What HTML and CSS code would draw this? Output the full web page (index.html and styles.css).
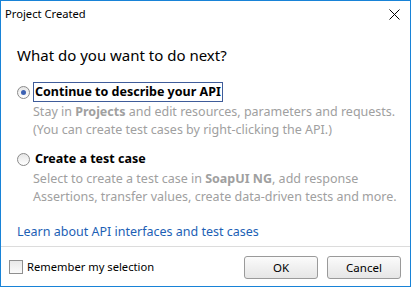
FILE: index.html
```html
<!DOCTYPE html>
<html lang="en">
<head>
  <meta charset="UTF-8" />
  <title>Project Created</title>
  <link rel="stylesheet" href="styles.css">
</head>
<body>
  <div class="window">
    <div class="titlebar">
      <span class="title">Project Created</span>
      <svg class="close" width="11" height="11" viewBox="0 0 11 11">
        <path d="M0.5 0.5 L10.5 10.5 M10.5 0.5 L0.5 10.5" stroke="#000" stroke-width="1" fill="none"/>
      </svg>
    </div>

    <div class="content">
      <h1>What do you want to do next?</h1>

      <div class="option">
        <div class="option-head">
          <span class="radio checked"></span>
          <span class="label focused">Continue to describe your API</span>
        </div>
        <div class="desc">
          Stay in <b>Projects</b> and edit resources, parameters and requests.<br>
          (You can create test cases by right-clicking the API.)
        </div>
      </div>

      <div class="option">
        <div class="option-head">
          <span class="radio"></span>
          <span class="label">Create a test case</span>
        </div>
        <div class="desc">
          Select to create a test case in <b>SoapUI NG</b>, add response<br>
          Assertions, transfer values, create data-driven tests and more.
        </div>
      </div>

      <a class="learn" href="#">Learn about API interfaces and test cases</a>
    </div>

    <div class="footer">
      <label class="remember"><span class="checkbox"></span>Remember my selection</label>
      <div class="buttons">
        <button class="btn">OK</button>
        <button class="btn">Cancel</button>
      </div>
    </div>
  </div>
</body>
</html>
```

FILE: styles.css
```css
html, body {
  margin: 0;
  padding: 0;
  background: #fff;
}

body {
  font-family: "Noto Sans", "Open Sans", sans-serif;
  font-size: 12px;
  color: #000;
}

.window {
  width: 411px;
  height: 287px;
  box-sizing: border-box;
  border: 1px solid #1883d7;
  display: flex;
  flex-direction: column;
  background: #fff;
  overflow: hidden;
}

.titlebar {
  height: 29px;
  flex: none;
  display: flex;
  align-items: center;
  justify-content: space-between;
  padding: 0 10px 0 4px;
}

.title {
  font-size: 11.2px;
  margin-top: -4px;
}

.close {
  display: block;
  margin-top: -2px;
}

.content {
  flex: 1;
  min-height: 0;
  padding: 14px 16px 0 16px;
  white-space: nowrap;
}

h1 {
  font-size: 15px;
  font-weight: normal;
  line-height: 22px;
  margin: 0 0 16px 0;
  color: #000;
}

.option {
  margin-bottom: 10px;
}

.option-head {
  display: flex;
  align-items: center;
  height: 20px;
}

.radio {
  width: 11px;
  height: 11px;
  border: 1px solid #8a8a8a;
  border-radius: 50%;
  position: relative;
  margin-right: 3px;
  background: linear-gradient(#e6e6e6, #ffffff);
}

.radio.checked::after {
  content: "";
  position: absolute;
  left: 3px;
  top: 3px;
  width: 5px;
  height: 5px;
  border-radius: 50%;
  background: #3d62b3;
}

.label {
  font-weight: bold;
  font-size: 12.5px;
  line-height: 18px;
  padding: 0 1px;
  border: 1px solid transparent;
}

.label.focused {
  border-color: #3f5c9a;
}

.desc {
  color: #a0a0a0;
  padding-left: 16px;
  font-size: 12.5px;
  line-height: 18px;
  margin-top: 1px;
}

.desc b {
  font-weight: bold;
}

.learn {
  display: block;
  margin-top: 17px;
  color: #1d5fb5;
  text-decoration: none;
  font-size: 12.5px;
  line-height: 18px;
}

.footer {
  height: 39px;
  flex: none;
  border-top: 1px solid #dcdcdc;
  display: flex;
  align-items: center;
  justify-content: space-between;
  padding: 0 9px 0 8px;
}

.remember {
  display: flex;
  align-items: center;
  font-size: 11.2px;
}

.checkbox {
  width: 12px;
  height: 12px;
  border: 1px solid #8f8f8f;
  margin-right: 4px;
  background: linear-gradient(#e8e8e8, #fafafa);
}

.buttons {
  display: flex;
  gap: 9px;
  margin-top: 1px;
}

.btn {
  width: 74px;
  height: 23px;
  font-family: inherit;
  font-size: 11.5px;
  background: linear-gradient(#fbfbfb, #f0f0f0 50%, #e6e6e6);
  border: 1px solid #9a9a9a;
  border-radius: 3px;
  color: #000;
  padding: 0;
}
```
